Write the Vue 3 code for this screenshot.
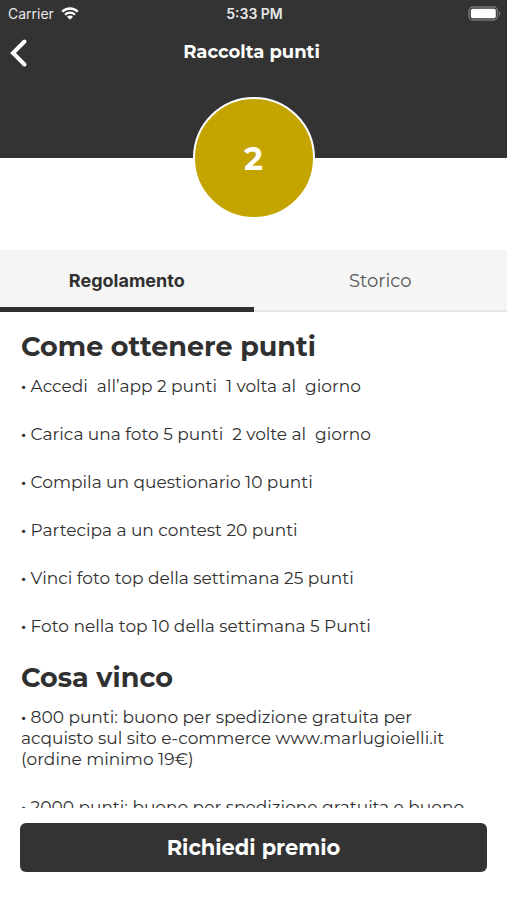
<template>
  <div class="screen">
    <header class="top">
      <div class="status-bar">
        <div class="carrier">
          <span>Carrier</span>
          <svg width="18" height="13" viewBox="0 0 18 13" aria-hidden="true">
            <path d="M1.2 4.6a11.2 11.2 0 0 1 15.6 0" fill="none" stroke="#fff" stroke-width="2.4" />
            <path d="M4 7.7a7.2 7.2 0 0 1 10 0" fill="none" stroke="#fff" stroke-width="2.2" />
            <path d="M9 12.8 6 9.8a4.2 4.2 0 0 1 6 0z" fill="#fff" />
          </svg>
        </div>
        <span class="clock">5:33 PM</span>
        <div class="battery">
          <svg width="33" height="15" viewBox="0 0 33 15" aria-hidden="true">
            <rect x="1" y="1" width="28.5" height="13" rx="4" fill="none" stroke="#777" stroke-width="1.4" />
            <rect x="2.8" y="2.8" width="25" height="9.4" rx="2" fill="#fff" />
            <path d="M31 5.2c1.8.6 1.8 4 0 4.6z" fill="#777" />
          </svg>
        </div>
      </div>
      <div class="nav">
        <button class="back" type="button" aria-label="Indietro">
          <svg width="18" height="30" viewBox="0 0 18 30" aria-hidden="true">
            <path d="M14.5 3.5 3 15l11.5 11.5" fill="none" stroke="#fff" stroke-width="4" stroke-linecap="round" stroke-linejoin="miter" />
          </svg>
        </button>
        <h1>Raccolta punti</h1>
      </div>
    </header>

    <div class="points">{{ points }}</div>

    <nav class="tabs">
      <button
        v-for="tab in tabs"
        :key="tab"
        type="button"
        :class="{ active: tab === activeTab }"
        @click="activeTab = tab"
      >{{ tab }}</button>
    </nav>

    <main class="content">
      <section v-for="section in sections" :key="section.title">
        <h2>{{ section.title }}</h2>
        <p v-for="rule in section.rules" :key="rule"><b>·</b> {{ rule }}</p>
      </section>
    </main>

    <footer class="bottom">
      <button type="button">Richiedi premio</button>
    </footer>
  </div>
</template>

<script setup>
import { ref } from 'vue'

const points = ref(2)
const tabs = ['Regolamento', 'Storico']
const activeTab = ref('Regolamento')

const sections = [
  {
    title: 'Come ottenere punti',
    rules: [
      'Accedi  all’app 2 punti  1 volta al  giorno',
      'Carica una foto 5 punti  2 volte al  giorno',
      'Compila un questionario 10 punti',
      'Partecipa a un contest 20 punti',
      'Vinci foto top della settimana 25 punti',
      'Foto nella top 10 della settimana 5 Punti'
    ]
  },
  {
    title: 'Cosa vinco',
    rules: [
      '800 punti: buono per spedizione gratuita per acquisto sul sito e-commerce www.marlugioielli.it (ordine minimo 19€)',
      '2000 punti: buono per spedizione gratuita e buono'
    ]
  }
]
</script>

<style>
body {
  margin: 0;
  background: #fff;
}
</style>

<style scoped>
.screen {
  display: flex;
  flex-direction: column;
  height: 100vh;
  font-family: Montserrat, Inter, sans-serif;
  color: #303030;
}

button {
  border: none;
  padding: 0;
  font-family: inherit;
  cursor: pointer;
}

.top {
  flex: none;
  box-sizing: border-box;
  padding-bottom: 82px;
  background: #333;
  color: #fff;
}

.status-bar {
  display: grid;
  grid-template-columns: 1fr auto 1fr;
  align-items: center;
  height: 27px;
  padding: 0 6px 0 8px;
  font-family: Inter, sans-serif;
  font-size: 14px;
  color: #e8e8e8;
}

.carrier {
  display: flex;
  align-items: center;
  gap: 7px;
}

.clock {
  font-weight: 600;
}

.battery {
  display: flex;
  justify-content: flex-end;
}

.nav {
  display: grid;
  grid-template-columns: 44px 1fr 48px;
  align-items: center;
  height: 49px;
}

.back {
  display: flex;
  padding: 2px 0 0 10px;
  background: none;
}

h1 {
  margin: 0;
  font-size: 18px;
  line-height: 24px;
  font-weight: 700;
  text-align: center;
}

.points {
  display: flex;
  flex: none;
  align-items: center;
  justify-content: center;
  align-self: center;
  box-sizing: border-box;
  width: 122px;
  height: 122px;
  margin: -61px 0 31px;
  border: 2px solid #fff;
  border-radius: 50%;
  background: #c4a400;
  color: #fff;
  font-size: 32px;
  font-weight: 700;
}

.tabs {
  display: flex;
  flex: none;
  height: 62px;
  background: #f5f5f5;
}

.tabs button {
  flex: 1;
  padding-top: 2px;
  border-bottom: 2px solid #e8e8e8;
  background: none;
  color: #555;
  font-size: 18px;
}

.tabs .active {
  padding-top: 3px;
  border-bottom: 5px solid #303030;
  color: #303030;
  font-family: Inter, sans-serif;
  font-weight: 700;
}

.content {
  flex: 1;
  min-height: 0;
  padding: 18px 21px 0;
  overflow-y: auto;
  scrollbar-width: none;
}

h2 {
  margin: 0 0 12px;
  font-size: 27px;
  line-height: 34px;
  font-weight: 700;
}

p {
  margin: 0 0 27px;
  font-size: 17px;
  line-height: 21px;
  white-space: pre-wrap;
}

section p:last-child {
  margin-bottom: 24px;
}

.bottom {
  flex: none;
  padding: 15px 20px 28px;
}

.bottom button {
  width: 100%;
  height: 49px;
  border-radius: 6px;
  background: #333;
  color: #fff;
  font-size: 21px;
  font-weight: 700;
}
</style>
